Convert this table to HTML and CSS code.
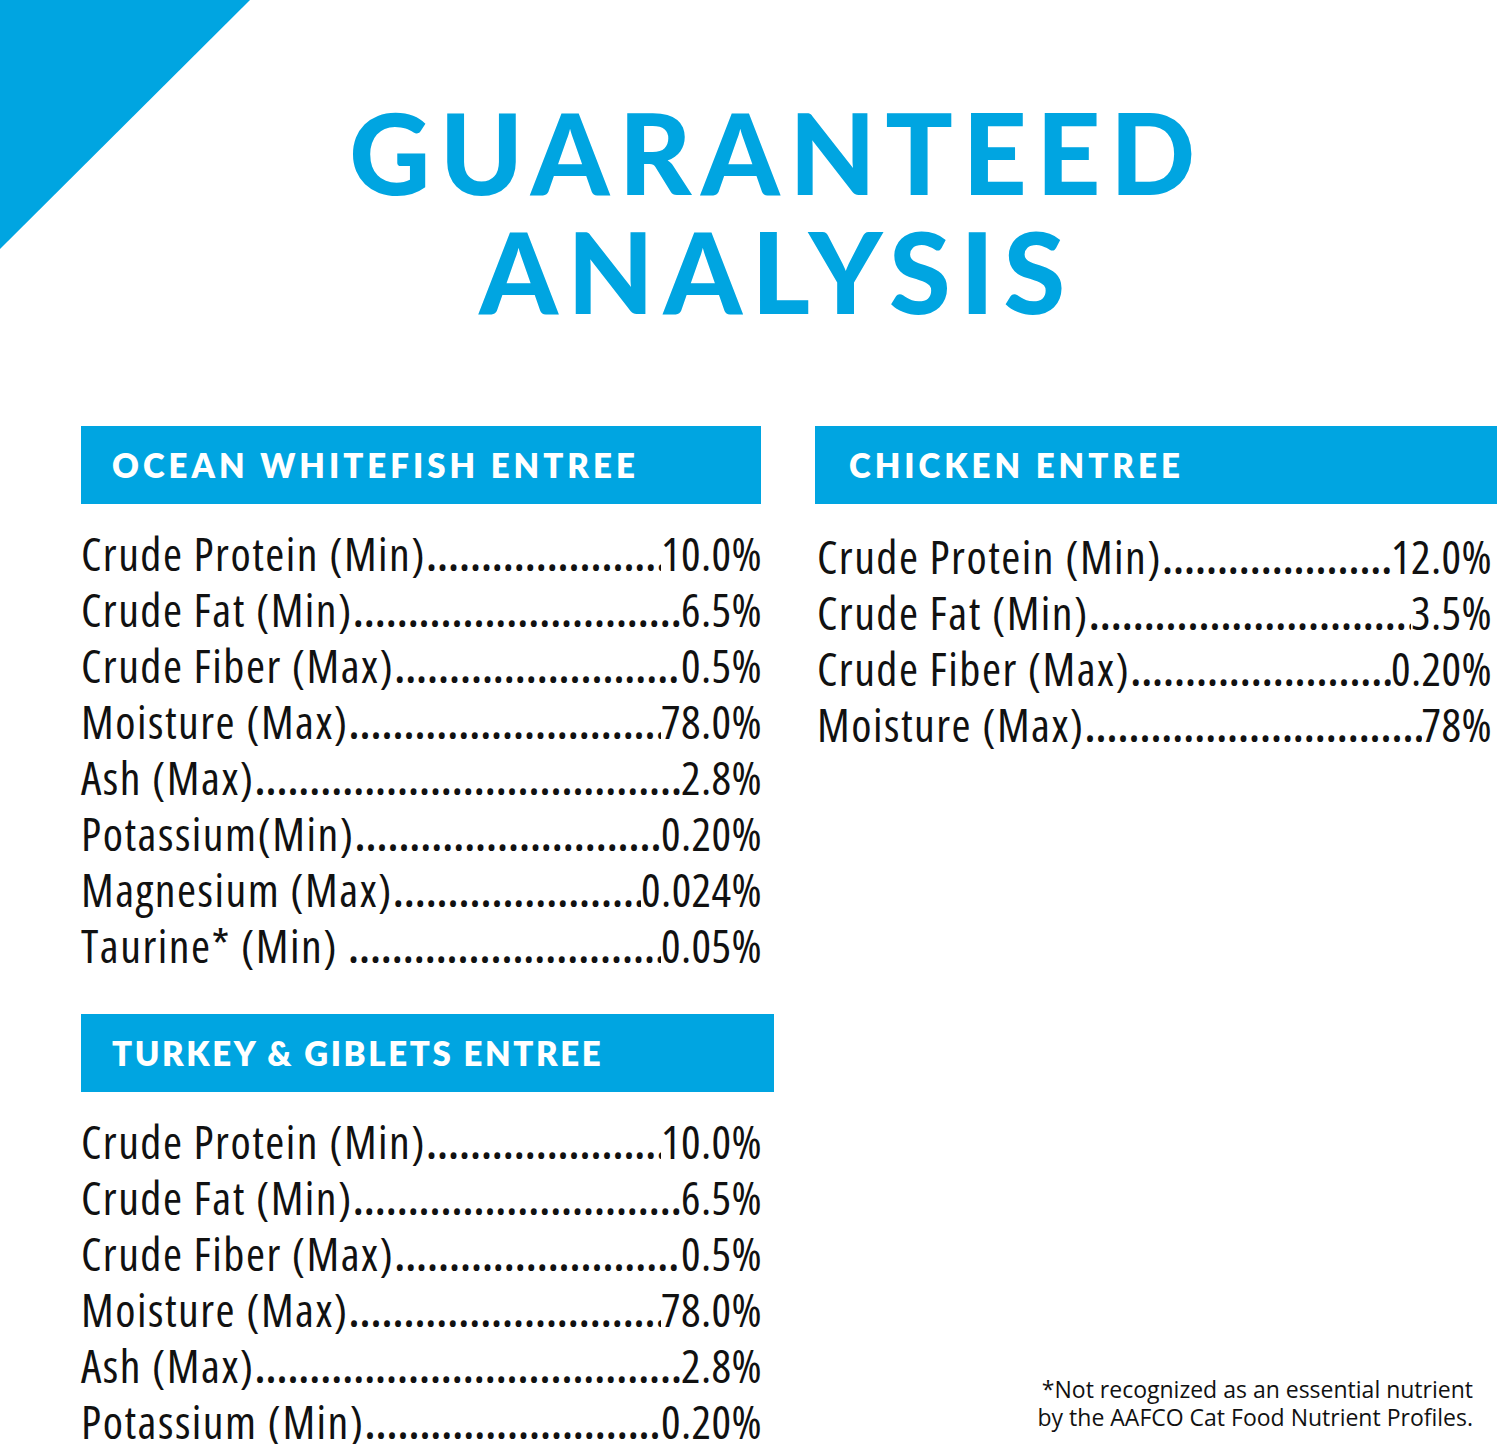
FILE: index.html
```html
<!DOCTYPE html>
<html lang="en">
<head>
<meta charset="utf-8">
<title>Guaranteed Analysis</title>
<link rel="stylesheet" href="styles.css">
</head>
<body>
<div class="page">
  <div class="corner"></div>
  <h1 class="title"><span>GUARANTEED</span><span>ANALYSIS</span></h1>
  <div class="columns">
    <div class="col col-left">
      <section class="entree">
        <h2 class="bar bar-1">OCEAN WHITEFISH ENTREE</h2>
        <ul class="rows">
          <li class="row"><span class="label">Crude Protein (Min)</span><span class="leader"></span><span class="val">10.0%</span></li>
          <li class="row"><span class="label">Crude Fat (Min)</span><span class="leader"></span><span class="val">6.5%</span></li>
          <li class="row"><span class="label">Crude Fiber (Max)</span><span class="leader"></span><span class="val">0.5%</span></li>
          <li class="row"><span class="label">Moisture (Max)</span><span class="leader"></span><span class="val">78.0%</span></li>
          <li class="row"><span class="label">Ash (Max)</span><span class="leader"></span><span class="val">2.8%</span></li>
          <li class="row"><span class="label">Potassium(Min)</span><span class="leader"></span><span class="val">0.20%</span></li>
          <li class="row"><span class="label">Magnesium (Max)</span><span class="leader"></span><span class="val">0.024%</span></li>
          <li class="row"><span class="label">Taurine* (Min)&nbsp;</span><span class="leader"></span><span class="val">0.05%</span></li>
        </ul>
      </section>
      <section class="entree entree-2">
        <h2 class="bar bar-3">TURKEY &amp; GIBLETS ENTREE</h2>
        <ul class="rows">
          <li class="row"><span class="label">Crude Protein (Min)</span><span class="leader"></span><span class="val">10.0%</span></li>
          <li class="row"><span class="label">Crude Fat (Min)</span><span class="leader"></span><span class="val">6.5%</span></li>
          <li class="row"><span class="label">Crude Fiber (Max)</span><span class="leader"></span><span class="val">0.5%</span></li>
          <li class="row"><span class="label">Moisture (Max)</span><span class="leader"></span><span class="val">78.0%</span></li>
          <li class="row"><span class="label">Ash (Max)</span><span class="leader"></span><span class="val">2.8%</span></li>
          <li class="row"><span class="label">Potassium (Min)</span><span class="leader"></span><span class="val">0.20%</span></li>
        </ul>
      </section>
    </div>
    <div class="col col-right">
      <section class="entree">
        <h2 class="bar bar-2">CHICKEN ENTREE</h2>
        <ul class="rows rows-right">
          <li class="row"><span class="label">Crude Protein (Min)</span><span class="leader"></span><span class="val">12.0%</span></li>
          <li class="row"><span class="label">Crude Fat (Min)</span><span class="leader"></span><span class="val">3.5%</span></li>
          <li class="row"><span class="label">Crude Fiber (Max)</span><span class="leader"></span><span class="val">0.20%</span></li>
          <li class="row"><span class="label">Moisture (Max)</span><span class="leader"></span><span class="val">78%</span></li>
        </ul>
      </section>
      <p class="note">*Not recognized as an essential nutrient<br>by the AAFCO Cat Food Nutrient Profiles.</p>
    </div>
  </div>
</div>
</body>
</html>
```
FILE: styles.css
```css
* { box-sizing: border-box; }
html, body { margin: 0; padding: 0; background: #fff; }
.page {
  position: relative;
  width: 1500px;
  height: 1444px;
  overflow: hidden;
  color: #111;
}
.corner {
  position: absolute;
  left: 0;
  top: 0;
  width: 250px;
  height: 249px;
  background: #00a5e1;
  clip-path: polygon(0 0, 100% 0, 0 100%);
}
.title {
  margin: 0;
  padding: 92px 0 0 54px;
  display: flex;
  flex-direction: column;
  align-items: center;
  font-family: Lato, "Open Sans", sans-serif;
  font-weight: 900;
  font-size: 112px;
  line-height: 119px;
  letter-spacing: 9.5px;
  color: #00a5e1;
}
.columns {
  display: grid;
  grid-template-columns: 694px 682px;
  column-gap: 40px;
  padding: 96px 0 0 81px;
  height: 1100px;
}
.col { display: flex; flex-direction: column; }
.col-right { justify-content: space-between; }
.entree-2 { margin-top: 41px; }
.bar {
  margin: 0;
  height: 78px;
  display: flex;
  align-items: center;
  padding-left: 31px;
  background: #00a5e1;
  color: #fff;
  font-family: Lato, "Open Sans", sans-serif;
  font-weight: 800;
  font-size: 33px;
  letter-spacing: 4px;
}
.bar-1 { width: 680px; }
.bar-2 { width: 682px; padding-left: 34px; }
.bar-3 { width: 693px; letter-spacing: 2.6px; }
.rows {
  list-style: none;
  margin: 0;
  padding: 21px 0 0 0;
  width: 681px;
  font-family: "Open Sans", sans-serif;
  font-stretch: 75%;
  font-weight: 400;
  font-size: 46px;
  line-height: 56px;
}
.rows-right { padding-top: 24px; width: 677px; padding-left: 2px; }
.row {
  display: flex;
  white-space: pre;
}
.label { flex: none; letter-spacing: 1.5px; }
.leader {
  flex: 1;
  overflow: hidden;
  font-weight: 600;
  letter-spacing: 0;
}
.leader::before {
  content: "................................................................................................................................";
}
.val { flex: none; letter-spacing: 0.4px; }
.note {
  margin: 0 0 18px 0;
  padding-right: 24px;
  text-align: right;
  font-family: "Open Sans", sans-serif;
  font-size: 23px;
  line-height: 28px;
  color: #111;
}
```
